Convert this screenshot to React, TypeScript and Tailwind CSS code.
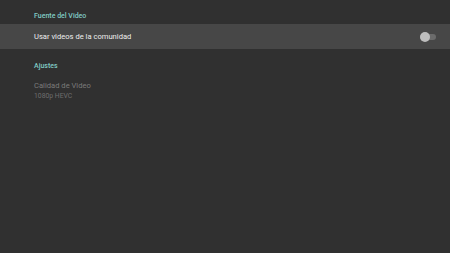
export default function App() {
  return (
    <div
      className="h-[253px] w-[450px] overflow-hidden bg-[#303030] pt-[11px]"
      style={{ fontFamily: "Roboto, 'Liberation Sans', sans-serif" }}
    >
      <p className="px-[34px] text-[7px] font-medium leading-[10px] text-[#80cbc4]">
        Fuente del Video
      </p>
      <div className="mt-[3px] flex h-[25px] items-center justify-between bg-[#474747] pl-[34px] pr-[13px]">
        <span className="text-[7.6px] leading-[10px] text-[#ededed]">Usar videos de la comunidad</span>
        <div className="relative flex h-[10px] w-[17px] items-center">
          <div className="h-[6px] w-[16px] rounded-full bg-[#6b6b6b]" />
          <div className="absolute left-0 h-[10px] w-[10px] rounded-full bg-[#bdbdbd]" />
        </div>
      </div>
      <p className="mt-[12px] px-[34px] text-[7px] font-medium leading-[10px] text-[#80cbc4]">
        Ajustes
      </p>
      <div className="mt-[10px] px-[34px]">
        <p className="text-[7.6px] leading-[10px] text-[#7a7a7a]">Calidad de Video</p>
        <p className="text-[6.8px] leading-[10px] text-[#6e6e6e]">1080p HEVC</p>
      </div>
    </div>
  );
}
